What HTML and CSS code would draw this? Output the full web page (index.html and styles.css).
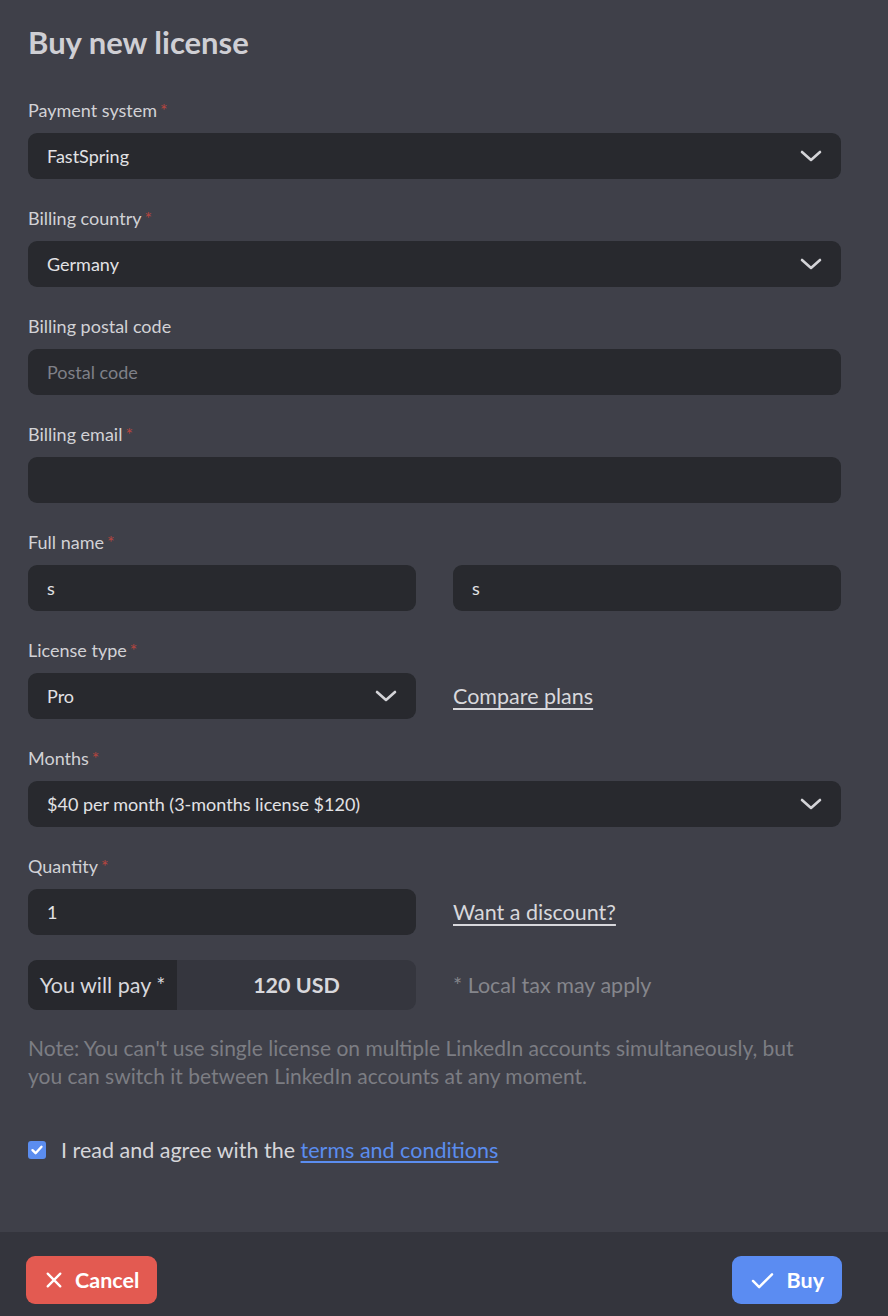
FILE: index.html
```html
<!DOCTYPE html>
<html lang="en">
  <head>
    <meta charset="UTF-8" />
    <meta name="viewport" content="width=device-width, initial-scale=1.0" />
    <title>Buy new license</title>
    <link rel="stylesheet" href="styles.css">
  </head>
  <body>
    <div id="dialog">
      <div id="content">
        <h1 class="title">Buy new license</h1>

        <div class="field">
          <label class="label">Payment system<span class="req">*</span></label>
          <div class="box select">
            <span class="value">FastSpring</span>
            <svg class="chevron" viewBox="0 0 22 12"><path d="M2 2 L11 10 L20 2" /></svg>
          </div>
        </div>

        <div class="field">
          <label class="label">Billing country<span class="req">*</span></label>
          <div class="box select">
            <span class="value">Germany</span>
            <svg class="chevron" viewBox="0 0 22 12"><path d="M2 2 L11 10 L20 2" /></svg>
          </div>
        </div>

        <div class="field">
          <label class="label">Billing postal code</label>
          <div class="box">
            <span class="placeholder">Postal code</span>
          </div>
        </div>

        <div class="field">
          <label class="label">Billing email<span class="req">*</span></label>
          <div class="box"></div>
        </div>

        <div class="field">
          <label class="label">Full name<span class="req">*</span></label>
          <div class="row">
            <div class="box half"><span class="value">s</span></div>
            <div class="box half"><span class="value">s</span></div>
          </div>
        </div>

        <div class="field">
          <label class="label">License type<span class="req">*</span></label>
          <div class="row">
            <div class="box select half">
              <span class="value">Pro</span>
              <svg class="chevron" viewBox="0 0 22 12"><path d="M2 2 L11 10 L20 2" /></svg>
            </div>
            <a class="side-link" href="#">Compare plans</a>
          </div>
        </div>

        <div class="field">
          <label class="label">Months<span class="req">*</span></label>
          <div class="box select">
            <span class="value">$40 per month (3-months license $120)</span>
            <svg class="chevron" viewBox="0 0 22 12"><path d="M2 2 L11 10 L20 2" /></svg>
          </div>
        </div>

        <div class="field field-last">
          <label class="label">Quantity<span class="req">*</span></label>
          <div class="row">
            <div class="box half"><span class="value">1</span></div>
            <a class="side-link" href="#">Want a discount?</a>
          </div>
        </div>

        <div class="row">
          <div class="pay half">
            <span class="pay-label">You will pay *</span>
            <span class="pay-sum">120 USD</span>
          </div>
          <span class="tax">* Local tax may apply</span>
        </div>

        <p class="note">Note: You can't use single license on multiple LinkedIn accounts simultaneously, but you can switch it between LinkedIn accounts at any moment.</p>

        <div class="agree">
          <span class="checkbox">
            <svg viewBox="0 0 18 18"><path d="M4.5 9.2 L7.6 12.2 L13.5 5.8" /></svg>
          </span>
          <span>I read and agree with the <a class="terms" href="#">terms and conditions</a></span>
        </div>
      </div>

      <div id="footer">
        <button class="btn btn-cancel">
          <svg viewBox="0 0 20 20"><path d="M3 3 L17 17 M17 3 L3 17" /></svg>
          Cancel
        </button>
        <button class="btn btn-buy">
          <svg viewBox="0 0 24 20"><path d="M2 10.5 L8.5 17 L22 3.5" /></svg>
          Buy
        </button>
      </div>
    </div>
  </body>
</html>
```

FILE: styles.css
```css
body {
  margin: 0;
  background-color: #3f4049;
  font-family: Lato, "Noto Sans", sans-serif;
  color: #d6d6da;
}
#dialog {
  height: 100vh;
  display: flex;
  flex-direction: column;
}
#content {
  flex: 1;
  padding: 20px 47px 0 28px;
}
.title {
  margin: 0 0 34px 0;
  font-size: 31px;
  line-height: 44px;
  font-weight: 700;
  color: #cfcfd4;
}
.field {
  margin-bottom: 27px;
}
.field-last {
  margin-bottom: 25px;
}
.label {
  display: block;
  font-size: 18px;
  line-height: 24px;
  margin-bottom: 11px;
  color: #d2d2d6;
}
.req {
  color: #b6453f;
  margin-left: 3px;
}
.row {
  display: flex;
  align-items: center;
  gap: 37px;
}
.box {
  height: 46px;
  box-sizing: border-box;
  background-color: #28292e;
  border-radius: 9px;
  padding: 0 19px;
  display: flex;
  align-items: center;
  justify-content: space-between;
  font-size: 18px;
}
.half {
  width: 388px;
  flex: none;
}
.value {
  color: #e2e2e5;
}
.placeholder {
  color: #7f8088;
}
.chevron {
  width: 22px;
  height: 12px;
  fill: none;
  stroke: #d4d4d8;
  stroke-width: 2.6;
  stroke-linecap: round;
  stroke-linejoin: round;
}
.side-link {
  color: #d8d8dc;
  font-size: 21.5px;
  text-decoration: underline;
  text-underline-offset: 4px;
}
.pay {
  height: 50px;
  display: flex;
  border-radius: 9px;
  overflow: hidden;
  background-color: #35363e;
  font-size: 21.5px;
}
.pay-label {
  width: 149px;
  background-color: #27282d;
  display: flex;
  align-items: center;
  justify-content: center;
  color: #d8d8dc;
}
.pay-sum {
  flex: 1;
  display: flex;
  align-items: center;
  justify-content: center;
  font-weight: 700;
  color: #d8d8dc;
}
.tax {
  color: #85868c;
  font-size: 21.5px;
}
.note {
  margin: 24px 0 0 0;
  max-width: 792px;
  font-size: 21px;
  line-height: 28px;
  color: #7c7d83;
}
.agree {
  margin-top: 46px;
  display: flex;
  align-items: center;
  gap: 15px;
  font-size: 21.5px;
  line-height: 28px;
  color: #d6d6da;
}
.checkbox {
  width: 18px;
  height: 18px;
  border-radius: 3px;
  background-color: #5b8def;
  display: flex;
  flex: none;
}
.checkbox svg {
  width: 18px;
  height: 18px;
  fill: none;
  stroke: #ffffff;
  stroke-width: 2.4;
  stroke-linecap: round;
  stroke-linejoin: round;
}
.terms {
  color: #5b8def;
  text-decoration: underline;
  text-underline-offset: 3px;
}
#footer {
  height: 84px;
  box-sizing: border-box;
  background-color: #34353d;
  padding: 24px 46px 0 26px;
  display: flex;
  justify-content: space-between;
  align-items: flex-start;
}
.btn {
  height: 48px;
  border: none;
  border-radius: 9px;
  display: flex;
  align-items: center;
  gap: 12px;
  font-family: Lato, "Noto Sans", sans-serif;
  font-size: 21.5px;
  font-weight: 700;
  color: #ffffff;
  cursor: pointer;
}
.btn svg {
  fill: none;
  stroke: #ffffff;
  stroke-width: 2.6;
  stroke-linecap: round;
  stroke-linejoin: round;
}
.btn-cancel {
  background-color: #e35a51;
  padding: 0 18px 0 19px;
}
.btn-cancel svg {
  width: 18px;
  height: 18px;
}
.btn-buy {
  background-color: #5b8cf2;
  padding: 0 18px 0 19px;
  gap: 13px;
}
.btn-buy svg {
  width: 23px;
  height: 19px;
}
```
